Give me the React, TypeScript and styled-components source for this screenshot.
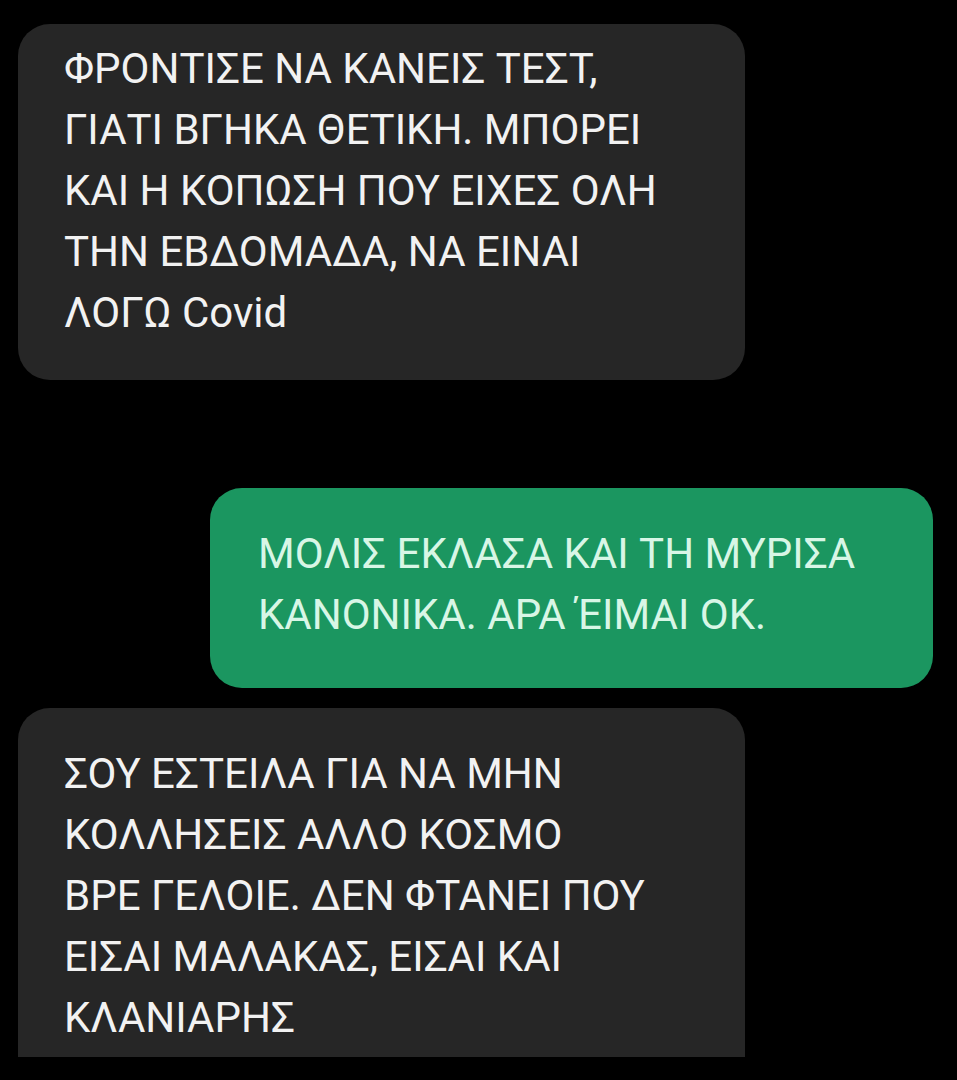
import React from "react";
import styled, { createGlobalStyle } from "styled-components";

const GlobalStyle = createGlobalStyle`
  html, body {
    margin: 0;
    padding: 0;
    background: #000;
  }
  body {
    font-family: Roboto, "Noto Sans", "DejaVu Sans", sans-serif;
  }
`;

const Thread = styled.div`
  display: flex;
  flex-direction: column;
  width: 957px;
  height: 1080px;
  padding: 24px 24px 0 18px;
  box-sizing: border-box;
  overflow: hidden;
`;

const Bubble = styled.div<{ $mine?: boolean; $cut?: boolean }>`
  box-sizing: border-box;
  align-self: ${(p) => (p.$mine ? "flex-end" : "flex-start")};
  width: ${(p) => (p.$mine ? "723px" : "727px")};
  background: ${(p) => (p.$mine ? "#1b9660" : "#262626")};
  color: ${(p) => (p.$mine ? "#d8f6e6" : "#f2f2f2")};
  border-radius: ${(p) => (p.$cut ? "32px 32px 0 0" : "32px")};
  padding: ${(p) =>
    p.$mine
      ? "35px 40px 43px 48px"
      : p.$cut
      ? "35px 40px 9px 46px"
      : "14px 40px 37px 46px"};
  font-size: 42px;
  line-height: 61px;
  font-weight: 400;
`;

const Line = styled.span`
  display: block;
  white-space: nowrap;
`;

const Spacer = styled.div<{ $h: number }>`
  flex: none;
  height: ${(p) => p.$h}px;
`;

type Msg = { mine?: boolean; cut?: boolean; lines: string[] };

const messages: Msg[] = [
  {
    lines: [
      "ΦΡΟΝΤΙΣΕ ΝΑ ΚΑΝΕΙΣ ΤΕΣΤ,",
      "ΓΙΑΤΙ ΒΓΗΚΑ ΘΕΤΙΚΗ. ΜΠΟΡΕΙ",
      "ΚΑΙ Η ΚΟΠΩΣΗ ΠΟΥ ΕΙΧΕΣ ΟΛΗ",
      "ΤΗΝ ΕΒΔΟΜΑΔΑ, ΝΑ ΕΙΝΑΙ",
      "ΛΟΓΩ Covid",
    ],
  },
  {
    mine: true,
    lines: ["ΜΟΛΙΣ ΕΚΛΑΣΑ ΚΑΙ ΤΗ ΜΥΡΙΣΑ", "ΚΑΝΟΝΙΚΑ. ΑΡΑ ΈΙΜΑΙ ΟΚ."],
  },
  {
    cut: true,
    lines: [
      "ΣΟΥ ΕΣΤΕΙΛΑ ΓΙΑ ΝΑ ΜΗΝ",
      "ΚΟΛΛΗΣΕΙΣ ΑΛΛΟ ΚΟΣΜΟ",
      "ΒΡΕ ΓΕΛΟΙΕ. ΔΕΝ ΦΤΑΝΕΙ ΠΟΥ",
      "ΕΙΣΑΙ ΜΑΛΑΚΑΣ, ΕΙΣΑΙ ΚΑΙ",
      "ΚΛΑΝΙΑΡΗΣ",
    ],
  },
];

const gaps = [108, 20];

const App = () => {
  return (
    <>
      <GlobalStyle />
      <Thread>
        {messages.map((m, i) => (
          <React.Fragment key={i}>
            {i > 0 && <Spacer $h={gaps[i - 1]} />}
            <Bubble $mine={m.mine} $cut={m.cut}>
              {m.lines.map((l) => (
                <Line key={l}>{l}</Line>
              ))}
            </Bubble>
          </React.Fragment>
        ))}
      </Thread>
    </>
  );
};

export default App;
